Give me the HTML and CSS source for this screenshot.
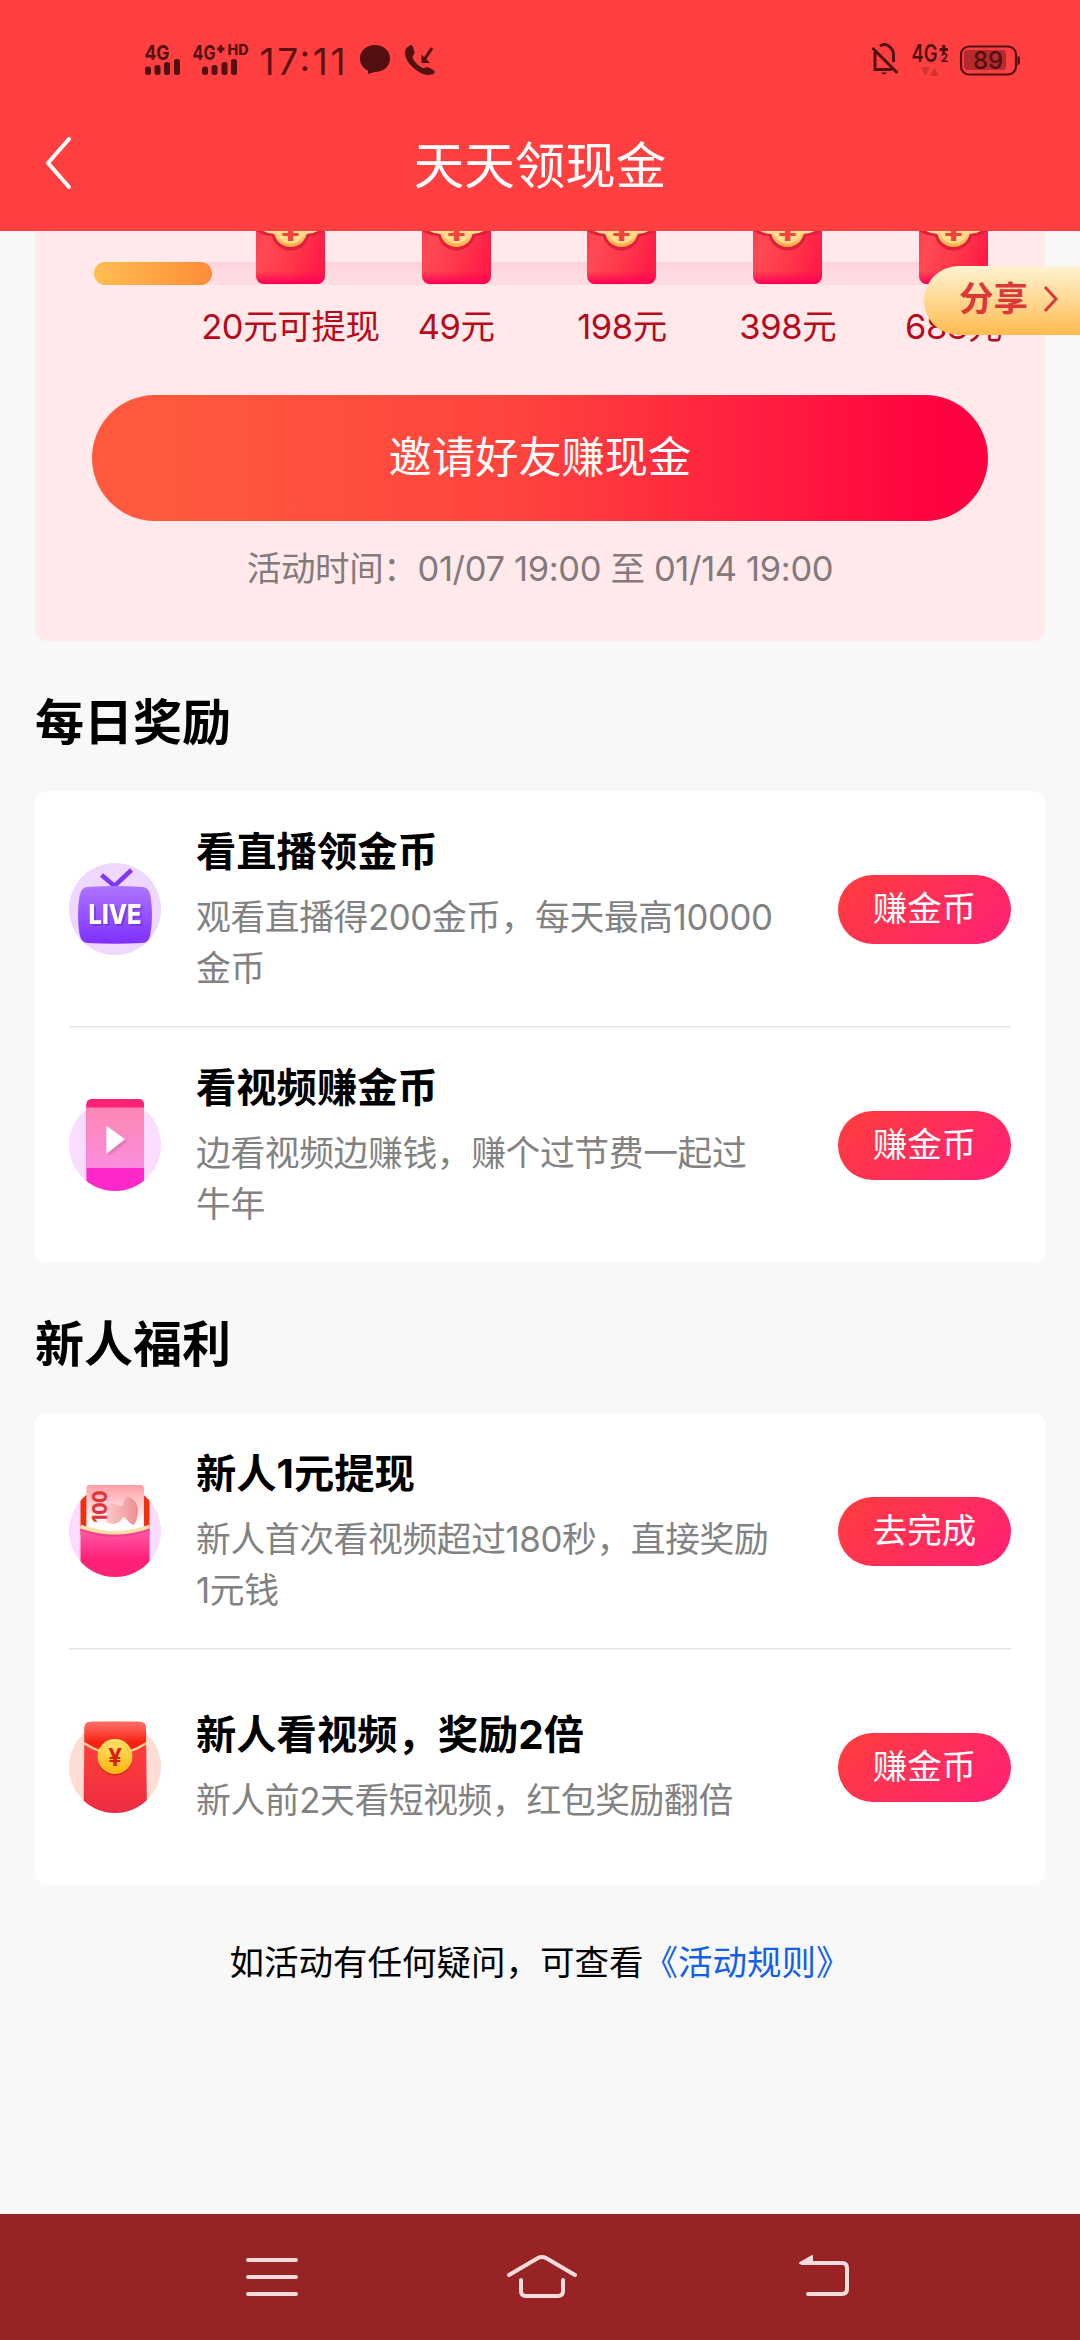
FILE: index.html
```html
<!DOCTYPE html>
<html lang="zh-CN">
<head>
<meta charset="utf-8">
<title>天天领现金</title>
<link rel="stylesheet" href="styles.css">
</head>
<body>
<svg class="defs" width="0" height="0" aria-hidden="true">
  <defs>
    <linearGradient id="body" x1="0" y1="0" x2="1" y2="0.25"><stop offset="0" stop-color="#ff3c50"/><stop offset=".18" stop-color="#ff4a52"/><stop offset=".6" stop-color="#ff384a"/><stop offset="1" stop-color="#ff1d47"/></linearGradient>
    <linearGradient id="base" x1="0" y1="0" x2="0" y2="1"><stop offset="0" stop-color="#ff0055" stop-opacity="0"/><stop offset="1" stop-color="#ff0055"/></linearGradient>
    <linearGradient id="coin" x1="0" y1="0" x2="0" y2="1"><stop offset=".4" stop-color="#ffe9a8"/><stop offset="1" stop-color="#ffa63f"/></linearGradient>
    <clipPath id="bowl"><path d="M0 0H92V46A46 46 0 0 1 0 46Z"/></clipPath>
    <clipPath id="disc"><circle cx="46" cy="46" r="46"/></clipPath>
    <symbol id="packet" viewBox="0 0 69 53">
      <path d="M0 0H69V45a8 8 0 0 1-8 8H8a8 8 0 0 1-8-8Z" fill="url(#body)"/>
      <path d="M0 40H69V45a8 8 0 0 1-8 8H8a8 8 0 0 1-8-8Z" fill="url(#base)"/>
      <path d="M0 0Q8 5 16 5A19 19 0 0 0 53 5Q61 5 69 0Z" fill="#df1f3c"/>
      <path d="M7 0Q13 3 19 3H50Q56 3 62 0Z" fill="#ffdf9e"/>
      <circle cx="34.500" cy="-.5" r="16.500" fill="url(#coin)"/>
      <circle cx="34.500" cy="-1" r="13.500" fill="#ffdf8d"/>
      <text x="34.500" y="10" class="yen yen-packet">¥</text>
    </symbol>
  </defs>
</svg>

<header class="top">
  <div class="status">
    <svg class="status-left" width="340" height="60" viewBox="120 25 340 60">
      <g class="ink">
        <text x="144.500" y="60" class="net" textLength="25" lengthAdjust="spacingAndGlyphs">4G</text>
        <rect x="145" y="66.500" width="6" height="8.500" rx="2.500"/><rect x="154.500" y="65" width="6" height="10" rx="2.500"/><rect x="164" y="62" width="6" height="13" rx="2.500"/><rect x="174" y="59" width="6" height="16" rx="2.500"/>
        <text x="192.500" y="60" class="net" textLength="23" lengthAdjust="spacingAndGlyphs">4G</text>
        <path d="M217 49H224.500M220.700 45.200V53" class="plus"/>
        <text x="227.500" y="55" class="hd" textLength="21" lengthAdjust="spacingAndGlyphs">HD</text>
        <rect x="202" y="66.500" width="6" height="8.500" rx="2.500"/><rect x="211.500" y="65" width="6" height="10" rx="2.500"/><rect x="221.500" y="62" width="6" height="13" rx="2.500"/><rect x="231" y="59" width="6" height="16" rx="2.500"/>
        <text x="259.500" y="75" class="clock" textLength="86">17:11</text>
        <path d="M375 45C383.500 45 390 50.500 390 58.500S383.500 72 375 72L368 74V70.500C363 68.500 360 64 360 58.500C360 50.500 366.500 45 375 45Z"/>
        <path d="M410 45.500C411 44.500 412.500 45.500 413 47L414.500 52C415 54.500 412.500 55 412.500 57C413.500 61.500 419 66.500 423 68C425 68.500 426 66.500 428 67L434 70.500C435 71.500 435 72.500 434 73.500C430 76 424 75 419 72C411 67 404.500 59.500 405 52C405.200 49 407.500 46.500 410 45.500Z"/>
        <path d="M421.500 54.500V63H430Z"/><path d="M432 48L424 60" class="plus"/>
      </g>
    </svg>
    <svg class="status-right" width="240" height="60" viewBox="840 25 240 60">
      <g class="ink">
        <path d="M875 56V73.500H892M880 50Q884 47.500 888 49.500Q893.500 53 893.500 59V66" class="line"/>
        <path d="M872.500 52L897.500 77" class="line"/><path d="M881 76.500H887Q884 80.500 881 76.500ZM880 50Q884 45.500 888 50Z"/>
        <text x="911.500" y="66" class="net4" textLength="26" lengthAdjust="spacingAndGlyphs">4G</text>
        <path d="M939.500 53.500H948M943.700 49V58" class="plus"/>
        <text x="940.500" y="66" class="two">2</text>
        <g class="faint"><path d="M921 71H930L925.500 80ZM930 80H939L934.500 71Z"/></g>
        <rect x="964" y="54" width="42" height="20" rx="4" class="charge"/>
        <rect x="961" y="50.500" width="55" height="28" rx="8" class="line thin"/>
        <path d="M1017.500 60Q1020 60 1020 63V66Q1020 69 1017.500 69Z"/>
        <text x="973" y="73" class="percent" textLength="30">89</text>
      </g>
    </svg>
  </div>
  <div class="titlebar">
    <svg class="back" width="30" height="56" viewBox="0 0 30 56"><path d="M26 4L5 28L26 52"/></svg>
    <h1>天天领现金</h1>
  </div>
</header>

<main class="content">
  <section class="promo">
    <div class="track"><div class="fill"></div></div>
    <ol class="steps">
      <li><svg class="packet"><use href="#packet"/></svg><span>20元可提现</span></li>
      <li><svg class="packet"><use href="#packet"/></svg><span>49元</span></li>
      <li><svg class="packet"><use href="#packet"/></svg><span>198元</span></li>
      <li><svg class="packet"><use href="#packet"/></svg><span>398元</span></li>
      <li><svg class="packet"><use href="#packet"/></svg><span>688元</span></li>
    </ol>
    <button class="invite">邀请好友赚现金</button>
    <p class="period">活动时间：01/07 19:00 至 01/14 19:00</p>
  </section>
  <a class="share">分享<svg width="18" height="30" viewBox="0 0 18 30"><path d="M3 3L14 15L3 27"/></svg></a>

  <h2>每日奖励</h2>
  <section class="card">
    <article class="row">
      <svg class="icon" viewBox="0 0 92 92">
        <defs><linearGradient id="tv" x1="0" y1="0" x2="0" y2="1"><stop offset="0" stop-color="#ad75ff"/><stop offset="1" stop-color="#7e30ff"/></linearGradient></defs>
        <circle cx="46" cy="46" r="46" fill="#efd8ff"/>
        <path d="M32.500 12L45.500 23L62.500 7" fill="none" stroke="#7f38f7" stroke-width="4.500"/>
        <path d="M18 24Q46 22 74 24Q80 24.500 81.500 33Q84.500 52 81.500 71Q80 80 73 80Q46 81.500 19 80Q12 80 10.500 71Q7.500 52 10.500 33Q12 24.500 18 24Z" fill="url(#tv)"/>
        <text x="19.500" y="60.500" class="live" textLength="53" lengthAdjust="spacingAndGlyphs">LIVE</text>
      </svg>
      <div class="copy"><h3>看直播领金币</h3><p>观看直播得200金币，每天最高10000金币</p></div>
      <button class="go">赚金币</button>
    </article>
    <article class="row">
      <svg class="icon" viewBox="0 0 92 92">
        <defs><linearGradient id="screen" x1="0" y1="0" x2="0" y2="1"><stop offset="0" stop-color="#ff87b1"/><stop offset="1" stop-color="#fa8dde"/></linearGradient></defs>
        <circle cx="46" cy="46" r="46" fill="#fadcff"/>
        <g clip-path="url(#bowl)">
          <path d="M17.400 92V6Q17.400 0 23 0H69.500Q75 0 75 6V92Z" fill="#fc28c8"/>
          <path d="M17.400 9V6Q17.400 0 23 0H69.500Q75 0 75 6V9Z" fill="#ff2174"/>
          <rect x="17.400" y="8.500" width="57.600" height="60.500" fill="url(#screen)"/>
        </g>
        <path d="M40 29V57L58.500 42.500Z" fill="#c96fa5" opacity=".5"/>
        <path d="M37.400 26.700V54.700L56 40.200Z" fill="#fff"/>
      </svg>
      <div class="copy"><h3>看视频赚金币</h3><p>边看视频边赚钱，赚个过节费一起过牛年</p></div>
      <button class="go">赚金币</button>
    </article>
  </section>

  <h2>新人福利</h2>
  <section class="card">
    <article class="row">
      <svg class="icon" viewBox="0 0 92 92">
        <defs>
          <linearGradient id="note" x1="0" y1="0" x2="0" y2="1"><stop offset="0" stop-color="#ff9fa5"/><stop offset=".75" stop-color="#fff"/></linearGradient>
          <linearGradient id="pouch" x1="0" y1="0" x2="0" y2="1"><stop offset="0" stop-color="#ff62ab"/><stop offset=".65" stop-color="#ff2078"/></linearGradient>
          <linearGradient id="face" x1="0" y1="0" x2="1" y2="0"><stop offset="0" stop-color="#fcc9ca"/><stop offset="1" stop-color="#ef8d92"/></linearGradient>
        </defs>
        <circle cx="46" cy="46" r="46" fill="#fadcff"/>
        <g clip-path="url(#disc)"><rect x="11.500" y="10" width="69" height="40" fill="#f12e0d"/></g>
        <rect x="17.400" y="0" width="57.600" height="52" rx="3" fill="url(#note)"/>
        <path d="M39 19Q45 18 50 21L54 21Q55 12 60 12Q69 15 69 27Q68 36 65 40Q60 39 56 32L54 32Q50 39 44 39Q39 39 37 36Z" fill="url(#face)"/>
        <text transform="translate(37.700 37.500) rotate(-90)" class="hundred" textLength="32" lengthAdjust="spacingAndGlyphs">100</text>
        <g clip-path="url(#bowl)">
          <path d="M11.500 41Q46 56 80.500 41V92H11.500Z" fill="url(#pouch)"/>
          <path d="M11.500 44.500Q46 57 80.500 44.500" fill="none" stroke="#e42e77" stroke-opacity=".5" stroke-width="2"/>
          <path d="M11.500 41.500Q46 54 80.500 41.500" fill="none" stroke="#ffdfa8" stroke-width="3.500"/>
        </g>
      </svg>
      <div class="copy"><h3>新人1元提现</h3><p>新人首次看视频超过180秒，直接奖励1元钱</p></div>
      <button class="go">去完成</button>
    </article>
    <article class="row">
      <svg class="icon" viewBox="0 0 92 92">
        <defs>
          <linearGradient id="env" x1="0" y1="0" x2="0" y2="1"><stop offset=".2" stop-color="#ff4038"/><stop offset="1" stop-color="#ec2c43"/></linearGradient>
          <linearGradient id="flap" x1="0" y1="0" x2="0" y2="1"><stop offset="0" stop-color="#ff7068"/><stop offset=".65" stop-color="#f42313"/></linearGradient>
          <linearGradient id="gold" x1="0" y1="0" x2="0" y2="1"><stop offset="0" stop-color="#ffe373"/><stop offset="1" stop-color="#ffb70c"/></linearGradient>
        </defs>
        <circle cx="46" cy="46" r="46" fill="#ffddd5"/>
        <g clip-path="url(#bowl)">
          <path d="M15.500 7Q15.500 .7 22 .7H70Q77 .7 77 7L78 92H14.500Z" fill="url(#env)"/>
          <path d="M15.500 7Q15.500 .7 22 .7H70Q77 .7 77 7V22Q46 43 15.500 22Z" fill="url(#flap)"/>
          <path d="M15 22Q46 43 77.500 22" fill="none" stroke="#ffcfa0" stroke-width="2.200"/>
        </g>
        <circle cx="46" cy="37" r="17.500" fill="#a71b18" opacity=".55"/>
        <circle cx="46" cy="35.500" r="17.500" fill="url(#gold)"/>
        <circle cx="46" cy="35.500" r="14.500" fill="none" stroke="#ffb823" stroke-width="1" opacity=".6"/>
        <text x="46" y="44.500" class="yen">¥</text>
      </svg>
      <div class="copy"><h3>新人看视频，奖励2倍</h3><p>新人前2天看短视频，红包奖励翻倍</p></div>
      <button class="go">赚金币</button>
    </article>
  </section>

  <p class="rules">如活动有任何疑问，可查看<a>《活动规则》</a></p>
</main>

<nav class="navbar">
  <svg width="54" height="50" viewBox="0 0 54 50"><path d="M4 8H52M4 25H52M4 42H52"/></svg>
  <svg class="home" width="74" height="50" viewBox="0 0 74 50"><path d="M4 23L33 6Q37 4 41 6L70 23M16 28V39Q16 44 21 44H53Q58 44 58 39V28"/></svg>
  <svg width="56" height="50" viewBox="0 0 56 50"><path d="M6 11H46Q51 11 51 16V37Q51 42 46 42H12"/><path class="tip" d="M4 11L16 4V11Z"/></svg>
</nav>
</body>
</html>
```
FILE: styles.css
```css
* { box-sizing: border-box; margin: 0; padding: 0; }
body {
  width: 1080px; height: 2340px; overflow: hidden;
  display: flex; flex-direction: column;
  background: #f8f8f8; color: #000;
  font-family: Inter, "Noto Sans CJK SC", sans-serif;
  font-size: 34.5px; line-height: 51px;
}
button { border: 0; font: inherit; color: #fff; }
.defs { position: absolute; }

.top { height: 231px; flex: none; background: #ff3f40; display: flex; flex-direction: column; }
.status { height: 110px; padding: 25px 0 0; display: flex; justify-content: space-between; }
.status-left { margin-left: 120px; }
.status-right { margin-top: -4px; }
.ink { fill: #521011; font-family: Inter, sans-serif; }
.net { font-size: 20px; font-weight: 700; }
.net4 { font-size: 24px; font-weight: 600; }
.hd { font-size: 14px; font-weight: 800; }
.two { font-size: 12px; font-weight: 700; }
.clock { font-size: 37px; font-weight: 400; fill: #5c1213; }
.percent { font-size: 24px; font-weight: 500; }
.plus { fill: none; stroke: #521011; stroke-width: 3; }
.line { fill: none; stroke: #521011; stroke-width: 3; }
.thin { stroke-width: 2.2; }
.faint { opacity: .25; }
.charge { fill: #b52a2f; }
.titlebar { height: 110px; display: flex; align-items: center; padding: 0 43px; }
.back { flex: none; margin-top: -4px; }
.back path { fill: none; stroke: #fff; stroke-width: 4; stroke-linecap: round; stroke-linejoin: round; }
.titlebar h1 { flex: 1; margin-right: 30px; text-align: center; color: #fff; font-size: 50.5px; font-weight: 400; }

.content { position: relative; flex: 1; padding: 0 35px; overflow: hidden; }
.promo {
  height: 410px; padding-top: 31px; background: #ffe9eb; border-radius: 0 0 12px 12px;
  display: flex; flex-direction: column; align-items: center;
}
.track { width: 892px; height: 23px; flex: none; border-radius: 12px; background: linear-gradient(#ffd2da, #ffdbe2 50%); }
.fill { width: 118px; height: 23px; border-radius: 12px; background: linear-gradient(90deg, #ffbe51, #ff8c37); }
.steps {
  width: 830px; margin: -54px 0 0 165px;
  display: grid; grid-template-columns: repeat(5, 165.8px); list-style: none; flex: none;
}
.steps li { display: flex; flex-direction: column; align-items: center; gap: 17px; white-space: nowrap; color: #b70a1b; letter-spacing: -.4px; }
.packet { width: 69px; height: 53px; }
.invite {
  width: 896px; height: 126px; margin-top: 43px; flex: none; border-radius: 63px;
  font-size: 43.2px; padding-bottom: 1px;
  background: linear-gradient(90deg, #ff593d 8%, #ff433e 48%, #ff0040 96%);
}
.period { margin-top: 22px; color: #857a7b; white-space: nowrap; letter-spacing: -.35px; }
.share {
  position: absolute; right: 0; top: 35px; width: 156px; height: 69px; padding: 0 20px 4px 35px;
  display: flex; align-items: center; justify-content: space-between;
  border-radius: 35px 0 0 35px; background: linear-gradient(#fff3d2, #ffbb50);
  color: #dc3838; font-weight: 600;
}
.share svg path { fill: none; stroke: #dc3838; stroke-width: 3; }

h2 { font-size: 49px; line-height: 60px; font-weight: 700; padding: 52px 0 38px; }
.card { background: #fff; border-radius: 12px; padding: 0 34px; }
.row { height: 236px; display: flex; align-items: center; }
.row + .row { box-shadow: inset 0 1px #f0f0f0, 0 -1px #e5e5e5; }
.icon { width: 92px; height: 92px; flex: none; overflow: visible; }
.copy { width: 583px; margin-left: 35px; }
.copy h3 { font-size: 40.3px; line-height: 53px; font-weight: 700; margin-bottom: 14px; }
.copy p { color: #828282; font-size: 34.8px; letter-spacing: -.4px; }
.go {
  width: 173px; height: 69px; margin-left: auto; border-radius: 35px; padding-bottom: 2px;
  background: linear-gradient(135deg, #ff3a42 10%, #ff2370 90%);
}
.live { font: 800 27.5px Inter, sans-serif; fill: #fff; filter: drop-shadow(2px 2px 0 rgba(90, 40, 180, .45)); }
.hundred { font: 800 19.5px Inter, sans-serif; fill: #e23438; }
.yen { font: 700 24px Inter, sans-serif; fill: #dc1f13; text-anchor: middle; }
.yen-packet { font-size: 36px; fill: #f54240; }

.rules { margin-top: 52px; text-align: center; white-space: nowrap; }
.rules a { color: #1260ea; }

.navbar { height: 126px; flex: none; background: #982324; display: flex; justify-content: space-between; align-items: center; padding: 0 228px 0 244px; }
.home { margin-right: 11px; }
.navbar path { fill: none; stroke: #f5dcdc; stroke-width: 4; stroke-linecap: round; stroke-linejoin: round; }
.navbar .tip { fill: #f5dcdc; stroke-width: 2; }
```
